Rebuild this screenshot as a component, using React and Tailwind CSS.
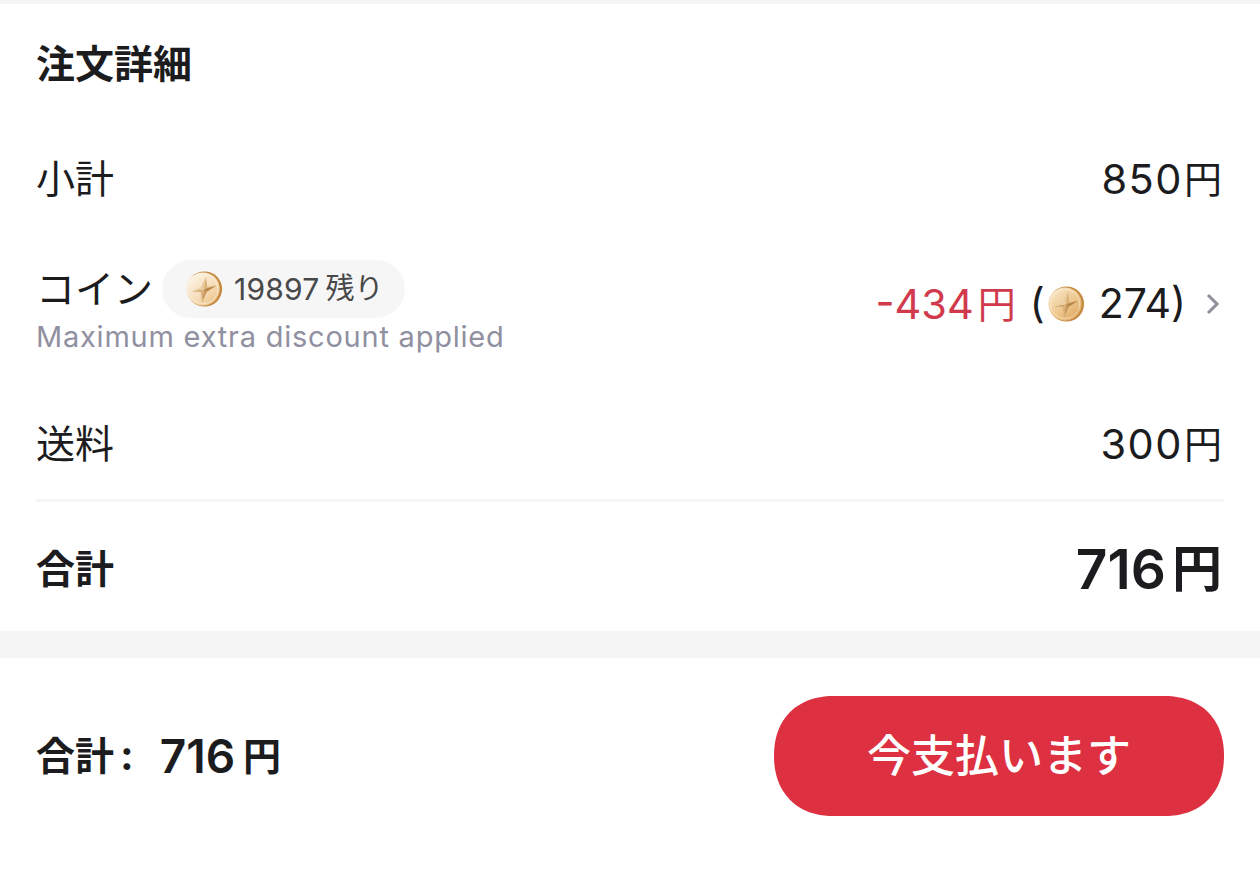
const FONT = "font-['Inter','Noto_Sans_CJK_JP',sans-serif]";

// four point star, one [points, fill] pair per facet
const STAR_FACETS = [
  ['20,20 22,7 17,17.5', '#e9c99a'],
  ['20,20 22,7 23.5,17.5', '#d9ae74'],
  ['20,20 23.5,17.5 33,16.5', '#e0b985'],
  ['20,20 33,16.5 23,23', '#b98546'],
  ['20,20 23,23 18,34', '#c4935a'],
  ['20,20 18,34 16.5,23', '#dcb27c'],
  ['20,20 16.5,23 7,22.5', '#cfa269'],
  ['20,20 7,22.5 17,17.5', '#ecd2aa'],
];

function Coin({ className, id, dark }) {
  return (
    <svg className={className} viewBox="0 0 40 40">
      <defs>
        <linearGradient id={id} x1="0.15" y1="0.1" x2="0.85" y2="0.9">
          <stop offset="0" stopColor={dark ? '#f8e4c4' : '#fcf2e4'} />
          <stop offset="0.55" stopColor={dark ? '#eec88f' : '#f6dfbc'} />
          <stop offset="1" stopColor={dark ? '#dfa863' : '#eec48c'} />
        </linearGradient>
      </defs>
      <circle cx="20.5" cy="20" r="18.5" fill="#c4893f" />
      <circle cx="19" cy="20" r="17.5" fill={`url(#${id})`} />
      <circle cx="19" cy="20" r="15.5" fill="none" stroke="#fff6e8" strokeWidth="0.8" opacity="0.7" />
      {STAR_FACETS.map(([points, fill]) => (
        <polygon key={points} points={points} fill={fill} />
      ))}
    </svg>
  );
}

function Row({ label, num }) {
  return (
    <div className="flex items-center justify-between h-[46px] text-[#1c1c1e]">
      <span className="text-[39px]">{label}</span>
      <span className="inline-flex items-center pr-[2px]">
        <span className="text-[41.5px] tracking-[1.5px]">{num}</span>
        <span className="ml-[1px] text-[38px]">円</span>
      </span>
    </div>
  );
}

export default function App() {
  return (
    <div className={`${FONT} w-[1260px] h-[879px] overflow-hidden bg-white flex flex-col`}>
      <div className="h-[4px] bg-[#f5f5f5]" />

      <section className="h-[627px] px-[36px] pt-[37px]">
        <h2 className="text-[39px] leading-[46px] font-bold text-[#1c1c1e]">注文詳細</h2>

        <div className="mt-[69px]">
          <Row label="小計" num="850" />
        </div>

        <div className="mt-[58px] flex items-start justify-between h-[94px]">
          <div>
            <div className="flex items-center h-[58px]">
              <span className="text-[39px] text-[#1c1c1e]">コイン</span>
              <div className="ml-[9px] flex items-center h-[58px] pl-[23px] pr-[22px] rounded-full bg-[#f6f6f6] text-[#48484a]">
                <Coin id="coin-a" className="w-[38px] h-[38px] mr-[11px]" />
                <span className="text-[30px] tracking-[0.2px]">19897</span>
                <span className="ml-[6px] text-[29px]">残り</span>
              </div>
            </div>
            <p className="text-[29px] leading-[38px] text-[#9090a0] tracking-[0.77px]">Maximum extra discount applied</p>
          </div>
          <div className="flex items-center h-[84px] mt-[2px] text-[#1c1c1e]">
            <span className="inline-flex items-center text-[#d13a4c]">
              <span className="text-[41.5px]">-434</span>
              <span className="ml-[4px] text-[38px]">円</span>
            </span>
            <span className="ml-[14px] text-[41px]">(</span>
            <Coin id="coin-b" dark className="w-[38px] h-[38px] mx-[2px]" />
            <span className="ml-[12px] text-[41px]">274)</span>
            <svg className="ml-[18px] w-[20px] h-[28px] text-[#8e8e9c]" viewBox="0 0 20 28" fill="none" stroke="currentColor" strokeWidth="3">
              <path d="M4 5 L13 14 L4 23" />
            </svg>
          </div>
        </div>

        <div className="mt-[67px]">
          <Row label="送料" num="300" />
        </div>

        <div className="mt-[32px] h-[3px] bg-[#f5f5f5]" />

        <div className="mt-[44px] flex items-center justify-between h-[46px]">
          <span className="text-[39px] font-bold text-[#1c1c1e]">合計</span>
          <span className="inline-flex items-center pr-[2px] text-[#1c1c1e]">
            <span className="text-[55px] font-semibold">716</span>
            <span className="ml-[6px] text-[50px] font-bold">円</span>
          </span>
        </div>
      </section>

      <div className="h-[27px] bg-[#f5f5f5]" />

      <footer className="flex-1 px-[36px] pt-[38px] flex items-start justify-between">
        <div className="h-[120px] flex items-center text-[#1c1c1e]">
          <span className="text-[39px] font-bold">合計</span>
          <span className="ml-[6px] text-[41px] font-bold">:</span>
          <span className="ml-[26px] inline-flex items-center">
            <span className="text-[46px] font-semibold">716</span>
            <span className="ml-[8px] text-[38px] font-bold">円</span>
          </span>
        </div>
        <button className="w-[450px] h-[120px] rounded-[60px] [corner-shape:superellipse(1.15)] bg-[#dd3040] text-white text-[44px] font-medium">
          今支払います
        </button>
      </footer>
    </div>
  );
}
